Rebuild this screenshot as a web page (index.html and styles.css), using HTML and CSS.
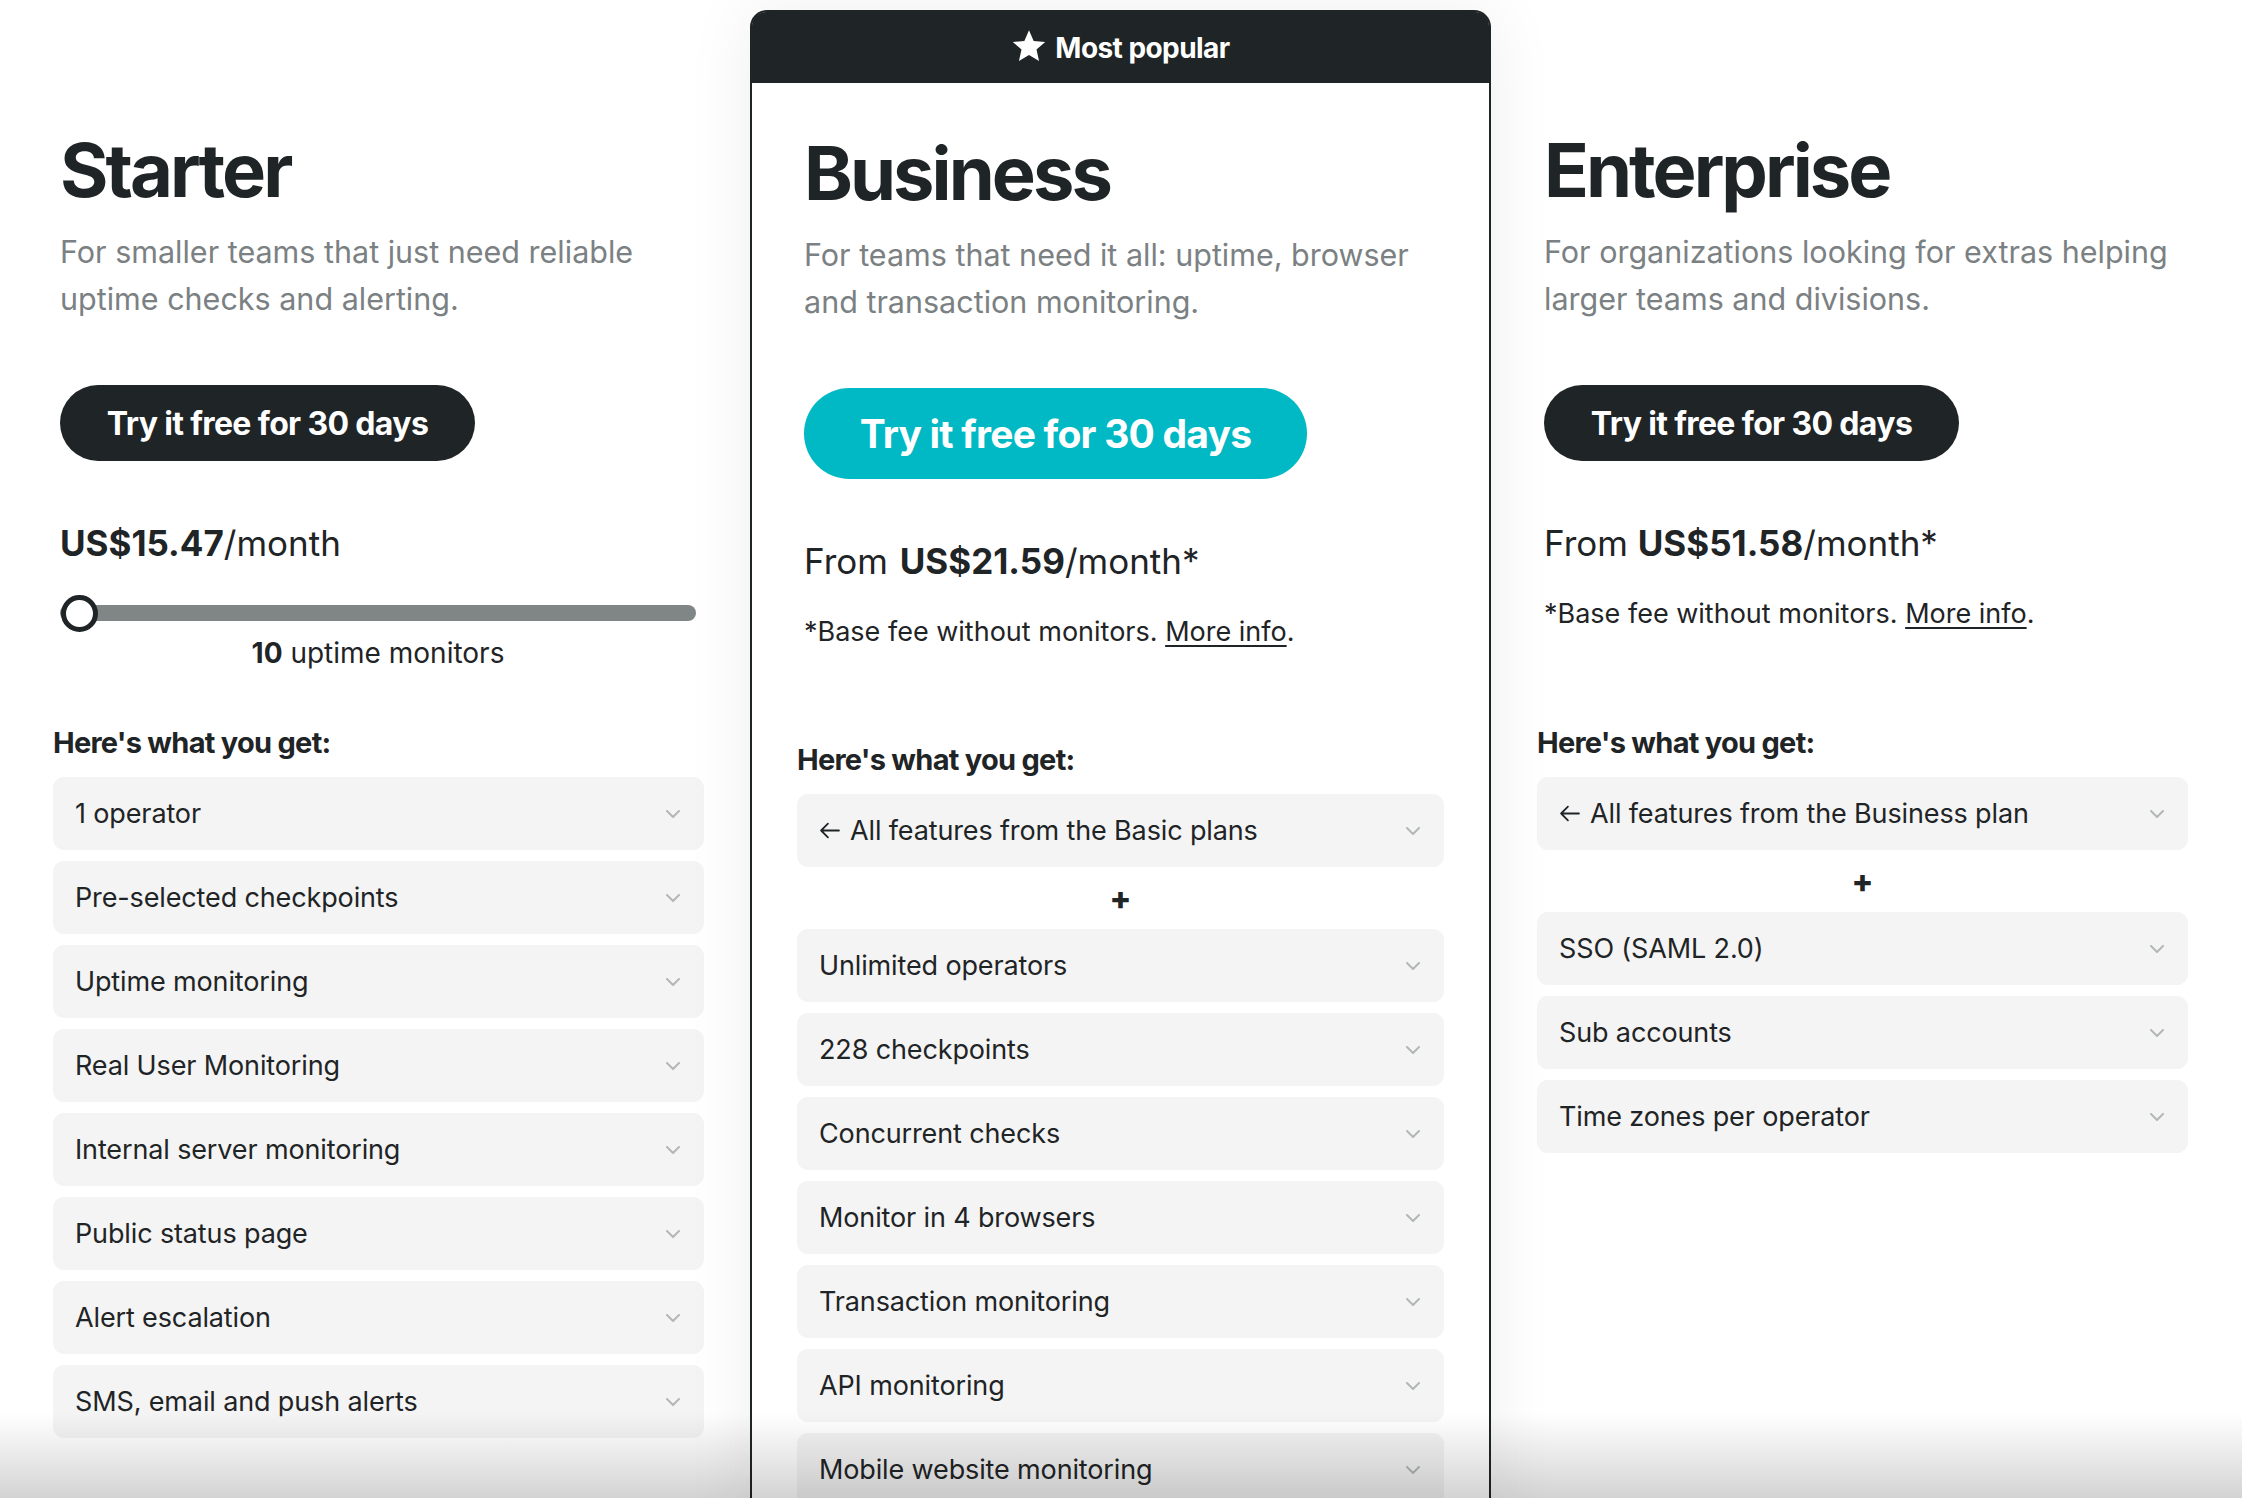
FILE: index.html
```html
<!DOCTYPE html>
<html lang="en">
<head>
<meta charset="utf-8">
<title>Pricing</title>
<link rel="stylesheet" href="styles.css">
</head>
<body>
<main class="plans">
  <section class="plan plan-side">
    <div class="intro">
      <h2 class="plan-name">Starter</h2>
      <p class="plan-desc">For smaller teams that just need reliable uptime checks and alerting.</p>
      <a class="btn btn-dark" href="#">Try it free for 30 days</a>
      <div class="price"><b>US$15.47</b>/month</div>
      <div class="slider">
        <div class="track"></div>
        <div class="thumb"></div>
      </div>
      <div class="slider-label"><b>10</b> uptime monitors</div>
    </div>
    <h3 class="get">Here's what you get:</h3>
    <ul class="features">
      <li class="feature"><span>1 operator</span><svg class="chev" viewBox="0 0 14 8"><path d="M1 1l6 6 6-6"/></svg></li>
      <li class="feature"><span>Pre-selected checkpoints</span><svg class="chev" viewBox="0 0 14 8"><path d="M1 1l6 6 6-6"/></svg></li>
      <li class="feature"><span>Uptime monitoring</span><svg class="chev" viewBox="0 0 14 8"><path d="M1 1l6 6 6-6"/></svg></li>
      <li class="feature"><span>Real User Monitoring</span><svg class="chev" viewBox="0 0 14 8"><path d="M1 1l6 6 6-6"/></svg></li>
      <li class="feature"><span>Internal server monitoring</span><svg class="chev" viewBox="0 0 14 8"><path d="M1 1l6 6 6-6"/></svg></li>
      <li class="feature"><span>Public status page</span><svg class="chev" viewBox="0 0 14 8"><path d="M1 1l6 6 6-6"/></svg></li>
      <li class="feature"><span>Alert escalation</span><svg class="chev" viewBox="0 0 14 8"><path d="M1 1l6 6 6-6"/></svg></li>
      <li class="feature"><span>SMS, email and push alerts</span><svg class="chev" viewBox="0 0 14 8"><path d="M1 1l6 6 6-6"/></svg></li>
    </ul>
  </section>

  <section class="plan plan-featured">
    <div class="badge">
      <svg class="star" viewBox="0 0 24 24"><path d="M12 1.5l3.1 7.1 7.7.7-5.8 5.1 1.7 7.6L12 18l-6.7 4 1.7-7.6-5.8-5.1 7.7-.7z"/></svg>
      <span>Most popular</span>
    </div>
    <div class="featured-body">
      <div class="intro">
        <h2 class="plan-name">Business</h2>
        <p class="plan-desc">For teams that need it all: uptime, browser and transaction monitoring.</p>
        <a class="btn btn-teal" href="#">Try it free for 30 days</a>
        <div class="price">From <b>US$21.59</b>/month*</div>
        <p class="note">*Base fee without monitors. <a href="#">More info</a>.</p>
      </div>
      <h3 class="get">Here's what you get:</h3>
      <ul class="features">
        <li class="feature"><span class="with-arrow"><svg class="arrow" viewBox="0 0 20 16"><path d="M19 8H2M8.5 1.5L2 8l6.5 6.5"/></svg>All features from the Basic plans</span><svg class="chev" viewBox="0 0 14 8"><path d="M1 1l6 6 6-6"/></svg></li>
        <li class="plus">+</li>
        <li class="feature"><span>Unlimited operators</span><svg class="chev" viewBox="0 0 14 8"><path d="M1 1l6 6 6-6"/></svg></li>
        <li class="feature"><span>228 checkpoints</span><svg class="chev" viewBox="0 0 14 8"><path d="M1 1l6 6 6-6"/></svg></li>
        <li class="feature"><span>Concurrent checks</span><svg class="chev" viewBox="0 0 14 8"><path d="M1 1l6 6 6-6"/></svg></li>
        <li class="feature"><span>Monitor in 4 browsers</span><svg class="chev" viewBox="0 0 14 8"><path d="M1 1l6 6 6-6"/></svg></li>
        <li class="feature"><span>Transaction monitoring</span><svg class="chev" viewBox="0 0 14 8"><path d="M1 1l6 6 6-6"/></svg></li>
        <li class="feature"><span>API monitoring</span><svg class="chev" viewBox="0 0 14 8"><path d="M1 1l6 6 6-6"/></svg></li>
        <li class="feature"><span>Mobile website monitoring</span><svg class="chev" viewBox="0 0 14 8"><path d="M1 1l6 6 6-6"/></svg></li>
      </ul>
    </div>
  </section>

  <section class="plan plan-side">
    <div class="intro">
      <h2 class="plan-name">Enterprise</h2>
      <p class="plan-desc">For organizations looking for extras helping larger teams and divisions.</p>
      <a class="btn btn-dark" href="#">Try it free for 30 days</a>
      <div class="price">From <b>US$51.58</b>/month*</div>
      <p class="note">*Base fee without monitors. <a href="#">More info</a>.</p>
    </div>
    <h3 class="get get-ent">Here's what you get:</h3>
    <ul class="features">
      <li class="feature"><span class="with-arrow"><svg class="arrow" viewBox="0 0 20 16"><path d="M19 8H2M8.5 1.5L2 8l6.5 6.5"/></svg>All features from the Business plan</span><svg class="chev" viewBox="0 0 14 8"><path d="M1 1l6 6 6-6"/></svg></li>
      <li class="plus">+</li>
      <li class="feature"><span>SSO (SAML 2.0)</span><svg class="chev" viewBox="0 0 14 8"><path d="M1 1l6 6 6-6"/></svg></li>
      <li class="feature"><span>Sub accounts</span><svg class="chev" viewBox="0 0 14 8"><path d="M1 1l6 6 6-6"/></svg></li>
      <li class="feature"><span>Time zones per operator</span><svg class="chev" viewBox="0 0 14 8"><path d="M1 1l6 6 6-6"/></svg></li>
    </ul>
  </section>
</main>
<div class="fade"></div>
</body>
</html>
```

FILE: styles.css
```css
* { box-sizing: border-box; }

html, body {
  margin: 0;
  padding: 0;
  background: #ffffff;
  height: 100%;
  overflow: hidden;
}

body {
  font-family: "Inter", "Noto Sans", "Liberation Sans", sans-serif;
  color: #1f2426;
}

.plans {
  display: flex;
  align-items: flex-start;
  gap: 46px;
  padding: 10px 54px 0 53px;
}

.plan-side {
  width: 651px;
  padding-top: 122px;
}

.plan-featured {
  width: 741px;
  border: 2px solid #1f2426;
  border-bottom: none;
  border-radius: 17px 17px 0 0;
  background: #fff;
  box-shadow: 0 0 70px rgba(0, 0, 0, 0.07);
  min-height: 1560px;
}

.badge {
  height: 71px;
  background: #1f2426;
  border-radius: 14px 14px 0 0;
  color: #fff;
  display: flex;
  align-items: center;
  justify-content: center;
  gap: 8px;
  font-size: 28px;
  font-weight: 700;
  letter-spacing: -0.02em;
}

.star {
  width: 36px;
  height: 36px;
  fill: #fff;
  margin-top: -4px;
}

.featured-body {
  padding: 52px 45px 0 45px;
}

.intro {
  padding-left: 7px;
}

.plan-name {
  margin: 0;
  font-size: 74px;
  line-height: 76px;
  font-weight: 700;
  letter-spacing: -0.04em;
}

.plan-desc {
  margin: 20px 0 0;
  font-size: 30.5px;
  line-height: 47px;
  color: #7b8183;
  max-width: 645px;
}

.btn {
  display: inline-flex;
  align-items: center;
  justify-content: center;
  text-decoration: none;
  color: #fff;
  font-weight: 700;
  border-radius: 999px;
  margin-top: 63px;
}

.btn-dark {
  width: 415px;
  height: 76px;
  background: #1f2426;
  font-size: 32px;
  letter-spacing: -0.02em;
}

.btn-teal {
  width: 503px;
  height: 91px;
  background: #00b9c5;
  font-size: 39px;
  letter-spacing: -0.02em;
}

.price {
  margin-top: 61px;
  font-size: 35px;
  line-height: 42px;
}

.price b {
  font-weight: 700;
  margin-left: 2px;
}

.plan-side .price b:first-child {
  margin-left: 0;
}

.note {
  margin: 34px 0 0;
  font-size: 27px;
  line-height: 32px;
}

.note a {
  color: inherit;
  text-decoration: underline;
  text-underline-offset: 4px;
  text-decoration-thickness: 2px;
}

.slider {
  position: relative;
  margin-top: 31px;
  width: 636px;
  height: 36px;
}

.track {
  position: absolute;
  left: 0;
  right: 0;
  top: 10px;
  height: 16px;
  border-radius: 8px;
  background: #7f8685;
}

.thumb {
  position: absolute;
  left: 1px;
  top: 0;
  width: 37px;
  height: 37px;
  border-radius: 50%;
  background: #fff;
  border: 5px solid #1f2426;
}

.slider-label {
  width: 636px;
  text-align: center;
  margin-top: 5px;
  font-size: 28px;
  line-height: 34px;
}

.get {
  margin: 56px 0 0;
  font-size: 29px;
  line-height: 34px;
  font-weight: 700;
  letter-spacing: -0.025em;
}

.get-ent {
  margin-top: 96px;
}

.plan-featured .get {
  margin-top: 95px;
}

.features {
  list-style: none;
  margin: 17px 0 0;
  padding: 0;
  display: flex;
  flex-direction: column;
  gap: 11px;
}

.feature {
  height: 73px;
  background: #f4f4f4;
  border-radius: 11px;
  display: flex;
  align-items: center;
  justify-content: space-between;
  padding: 0 24px 0 22px;
  font-size: 27px;
  letter-spacing: -0.005em;
}

.with-arrow {
  display: inline-flex;
  align-items: center;
  gap: 10px;
}

.arrow {
  width: 21px;
  height: 17px;
  fill: none;
  stroke: #1f2426;
  stroke-width: 1.7;
  stroke-linecap: round;
  stroke-linejoin: round;
}

.chev {
  width: 14px;
  height: 8px;
  fill: none;
  stroke: #b3b7b8;
  stroke-width: 2;
  stroke-linecap: round;
  stroke-linejoin: round;
}

.plus {
  height: 40px;
  display: flex;
  align-items: center;
  justify-content: center;
  font-size: 32px;
  font-weight: 800;
}

.fade {
  position: fixed;
  left: 0;
  right: 0;
  bottom: 0;
  height: 85px;
  background: linear-gradient(to bottom, rgba(255, 255, 255, 0), rgba(212, 212, 212, 1));
  mix-blend-mode: multiply;
  pointer-events: none;
}
```
